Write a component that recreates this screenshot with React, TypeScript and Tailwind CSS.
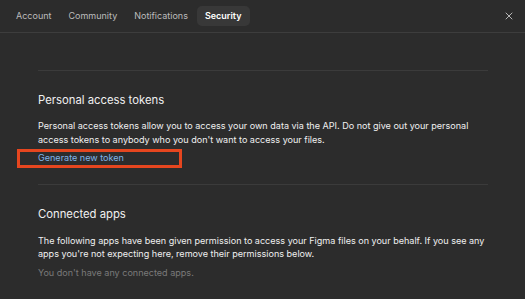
import { X } from 'lucide-react';

const tabs = ['Account', 'Community', 'Notifications', 'Security'];

export default function App() {
  return (
    <div
      className="w-[525px] h-[299px] bg-[#2c2c2c] overflow-hidden flex flex-col"
      style={{ fontFamily: 'Inter, "Noto Sans", sans-serif' }}
    >
      {/* Tabs */}
      <div className="h-[33px] shrink-0 flex items-center border-b border-[#3d3d3d] pl-[8px] pr-[10px]">
        <div className="flex items-center gap-[1px]">
          {tabs.map((t) => (
            <div
              key={t}
              className={`h-[20px] px-[8px] flex items-center rounded-[5px] text-[9px] ${
                t === 'Security'
                  ? 'bg-[#383838] text-white font-semibold'
                  : 'text-[#bcbcbc]'
              }`}
            >
              {t}
            </div>
          ))}
        </div>
        <button className="ml-auto text-[#dcdcdc]">
          <X className="w-[12px] h-[12px]" strokeWidth={1.6} />
        </button>
      </div>

      {/* Content */}
      <div className="pl-[38px] pr-[37px] pt-[37px] whitespace-nowrap">
        <div className="border-t border-[#3b3b3b]" />

        <section className="pt-[21px] pb-[19px]">
          <h2 className="text-[11.3px] leading-[16px] text-[#f0f0f0]">Personal access tokens</h2>
          <p className="mt-[11px] text-[9.05px] leading-[14px] text-[#f0f0f0]">
            Personal access tokens allow you to access your own data via the API. Do not give out your personal
            <br />
            access tokens to anybody who you don't want to access your files.
          </p>
          <div className="relative mt-[4px] h-[14px] text-[9.05px] leading-[14px]">
            <span className="block text-[#80b6ea]">Generate new token</span>
            <div className="absolute left-[-21px] top-[-2px] w-[165px] h-[19px] border-[3px] border-[#e6461f]" />
          </div>
        </section>

        <div className="border-t border-[#3b3b3b]" />

        <section className="pt-[21px]">
          <h2 className="text-[11.3px] leading-[16px] text-[#f0f0f0]">Connected apps</h2>
          <p className="mt-[12px] text-[9.05px] leading-[13px] text-[#f0f0f0]">
            The following apps have been given permission to access your Figma files on your behalf. If you see any
            <br />
            apps you're not expecting here, remove their permissions below.
          </p>
          <p className="mt-[6px] text-[9.05px] leading-[14px] text-[#7a7a7a]">
            You don't have any connected apps.
          </p>
        </section>
      </div>
    </div>
  );
}
